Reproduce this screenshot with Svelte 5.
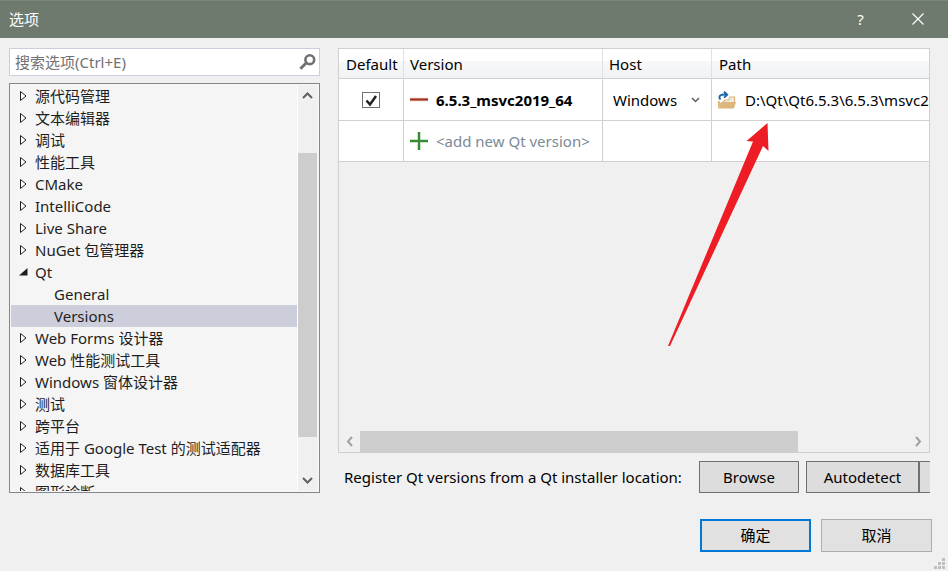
<script>
  const categories = [
    { name: '源代码管理' },
    { name: '文本编辑器' },
    { name: '调试' },
    { name: '性能工具' },
    { name: 'CMake' },
    { name: 'IntelliCode' },
    { name: 'Live Share' },
    { name: 'NuGet 包管理器' },
    { name: 'Qt', children: ['General', 'Versions'] },
    { name: 'Web Forms 设计器' },
    { name: 'Web 性能测试工具' },
    { name: 'Windows 窗体设计器' },
    { name: '测试' },
    { name: '跨平台' },
    { name: '适用于 Google Test 的测试适配器' },
    { name: '数据库工具' },
    { name: '图形诊断' }
  ];
  let selected = $state('Versions');
  let query = $state('');
  let isDefault = $state(true);
  let host = $state('Windows');
  let path = $state('D:\\Qt\\Qt6.5.3\\6.5.3\\msvc2019_64');
</script>

<div class="dialog">
  <header>
    <h1>选项</h1>
    <button class="caption" aria-label="Help">?</button>
    <button class="caption" aria-label="Close">
      <svg width="12" height="12" viewBox="0 0 12 12"><path d="M.5 .5l11 11M11.5 .5l-11 11" stroke="#fff" stroke-width="1.2" /></svg>
    </button>
  </header>

  <main>
    <aside>
      <div class="search">
        <input type="text" aria-label="搜索选项" placeholder="搜索选项(Ctrl+E)" bind:value={query} />
        <button class="find" aria-label="Search">
          <svg width="17" height="16" viewBox="0 0 17 16" fill="none" stroke="#717171">
            <circle cx="10.8" cy="5.7" r="4.4" stroke-width="2.6" />
            <path d="M7.2 9L1.4 14.8" stroke-width="3" />
          </svg>
        </button>
      </div>

      <div class="tree">
        <ul>
          {#each categories as item}
            <li>
              <button class="node" onclick={() => (selected = item.name)}>
                {#if item.children}
                  <svg width="9" height="10" viewBox="0 0 9 10"><path d="M8.5 1v7.5H0z" fill="#1e1e1e" /></svg>
                {:else}
                  <svg width="9" height="10" viewBox="0 0 9 10"><path d="M1.5 .5v9L7 5z" fill="#fff" stroke="#1e1e1e" /></svg>
                {/if}
                {item.name}
              </button>
              {#if item.children}
                <ul>
                  {#each item.children as child}
                    <li>
                      <button class="node child" class:selected={selected === child} onclick={() => (selected = child)}>{child}</button>
                    </li>
                  {/each}
                </ul>
              {/if}
            </li>
          {/each}
        </ul>
        <div class="vbar">
          <svg width="19" height="22" viewBox="0 0 19 22"><path d="M5 13l4.5-4.5L14 13" fill="none" stroke="#606060" stroke-width="2" /></svg>
          <div class="vtrack"><div class="vthumb"></div></div>
          <svg width="19" height="22" viewBox="0 0 19 22"><path d="M5 9l4.5 4.5L14 9" fill="none" stroke="#606060" stroke-width="2" /></svg>
        </div>
      </div>
    </aside>

    <section>
      <div class="grid">
        <div class="viewport">
          <table>
            <colgroup><col class="c1" /><col class="c2" /><col class="c3" /><col /></colgroup>
            <thead>
              <tr><th>Default</th><th>Version</th><th>Host</th><th>Path</th></tr>
            </thead>
            <tbody>
              <tr>
                <td class="center"><input type="checkbox" aria-label="Default" bind:checked={isDefault} /></td>
                <td>
                  <div class="cell">
                    <button class="icon" aria-label="Remove version">
                      <svg width="18" height="18" viewBox="0 0 18 18"><path d="M0 8.5h18" stroke="#e5b9b1" stroke-width="3.5" /><path d="M0 8.5h18" stroke="#a1301c" stroke-width="2" /></svg>
                    </button>
                    <strong>6.5.3_msvc2019_64</strong>
                  </div>
                </td>
                <td>
                  <div class="host">
                    <select aria-label="Host" bind:value={host}>
                      <option>Windows</option>
                      <option>Linux SSH</option>
                      <option>Linux WSL</option>
                    </select>
                    <svg width="9" height="6" viewBox="0 0 9 6"><path d="M1 1l3.5 3.5L8 1" fill="none" stroke="#606060" stroke-width="1.5" /></svg>
                  </div>
                </td>
                <td>
                  <div class="cell path">
                    <button class="icon" aria-label="Browse for path">
                      <svg width="18" height="18" viewBox="0 0 18 18">
                        <path d="M0 17V10h1.5l1.500 2.5z" fill="#dcb67a" />
                        <path d="M4.5 11.5L7 9h3.5l1.500-3h4.5v5.5z" fill="#efebe3" stroke="#dcb67a" stroke-width="1.2" />
                        <path d="M0 17.5L3.8 11H18L16 17.5z" fill="#dcb67a" />
                        <path d="M2.5 8.5C-.5 5 3 3 8.5 3.6M6 .6L9.2 3.7L6 6.6" fill="none" stroke="#1c66ad" stroke-width="1.9" />
                      </svg>
                    </button>
                    <input type="text" aria-label="Path" bind:value={path} />
                  </div>
                </td>
              </tr>
              <tr>
                <td></td>
                <td>
                  <div class="cell">
                    <button class="icon" aria-label="Add version">
                      <svg width="18" height="18" viewBox="0 0 18 18"><path d="M0 9h18M9 0v18" stroke="#b9dcb9" stroke-width="3.5" /><path d="M0 9h18M9 0v18" stroke="#388a34" stroke-width="2" /></svg>
                    </button>
                    <span class="hint">&lt;add new Qt version&gt;</span>
                  </div>
                </td>
                <td></td>
                <td></td>
              </tr>
            </tbody>
          </table>
        </div>
        <div class="hbar">
          <svg width="21" height="21" viewBox="0 0 21 21"><path d="M13 6l-4 4.5L13 15" fill="none" stroke="#a0a0a0" stroke-width="2" /></svg>
          <div class="htrack"><div class="hthumb"></div></div>
          <svg width="21" height="21" viewBox="0 0 21 21"><path d="M8 6l4 4.5L8 15" fill="none" stroke="#a0a0a0" stroke-width="2" /></svg>
        </div>
        <svg class="arrow" width="102" height="224" viewBox="0 0 102 224">
          <path d="M99.5 0L100.5 28L95 23L2 223H0L85 18.5L78.5 18z" fill="#ee1c24" />
        </svg>
      </div>

      <div class="register">
        <span>Register Qt versions from a Qt installer location:</span>
        <button class="tool browse">Browse</button>
        <button class="tool detect">Autodetect</button>
        <button class="tool more" aria-label="More"></button>
      </div>
    </section>
  </main>

  <footer>
    <button class="ok">确定</button>
    <button>取消</button>
    <svg class="grip" width="12" height="12" viewBox="0 0 12 12">
      <path d="M8 0h3v3h-3zM4 4h3v3h-3zM8 4h3v3h-3zM0 8h3v3h-3zM4 8h3v3h-3zM8 8h3v3h-3z" fill="#bfbfbf" />
    </svg>
  </footer>
</div>

<style>
  .dialog {
    display: flex;
    flex-direction: column;
    height: 100vh;
    position: relative;
    overflow: hidden;
    box-sizing: border-box;
    background: #f0f0f0;
    color: #000;
    font: 15px/22px 'Noto Sans', 'Noto Sans CJK SC', sans-serif;
  }
  .dialog * { box-sizing: border-box; }
  button, input, select { font: inherit; color: inherit; margin: 0; padding: 0; border-radius: 0; }
  svg { display: block; flex: none; }
  ul { list-style: none; margin: 0; padding: 0; }

  header {
    flex: none;
    display: flex;
    align-items: center;
    height: 38px;
    padding: 0 2px 2px 9px;
    background: #6f7a6e;
    border-top: 1px solid #7b867a;
    color: #fff;
  }
  h1 { flex: 1; margin: 0; font-size: 15px; font-weight: 400; }
  .caption { width: 57px; height: 35px; border: 0; background: none; display: flex; align-items: center; justify-content: center; }

  main { flex: 1; min-height: 0; display: flex; gap: 18px; padding: 10px 18px 0 9px; }
  aside { flex: none; width: 311px; display: flex; flex-direction: column; gap: 7px; }
  .search { display: flex; align-items: center; height: 28px; background: #fff; border: 1px solid #cccedb; padding: 0 3px 0 5px; }
  .search input { flex: 1; min-width: 0; border: 0; outline: 0; background: none; }
  .search input::placeholder { color: #717171; opacity: 1; }
  .find { border: 0; background: none; }

  .tree { flex: 1; min-height: 0; display: flex; border: 1px solid #828790; background: #f5f5f5; padding: 1px 2px 1px 1px; color: #1e1e1e; }
  .tree > ul { flex: 1; overflow: hidden; }
  .node { display: flex; align-items: center; gap: 7px; width: 100%; height: 22px; padding: 0 0 0 8px; border: 0; background: none; white-space: nowrap; }
  .child { padding-left: 43px; }
  .selected { background: #cccedb; }
  .vbar { flex: none; display: flex; flex-direction: column; width: 20px; border-left: 1px solid #fff; background: #f0f0f0; }
  .vtrack { flex: 1; padding-top: 46px; }
  .vthumb { height: 90%; background: #cdcdcd; }

  section { flex: 1; min-width: 0; display: flex; flex-direction: column; gap: 8px; }
  .grid { position: relative; flex: 1; min-height: 0; display: flex; flex-direction: column; border: 1px solid #d0d0d0; }
  .viewport { flex: 1; min-height: 0; overflow: hidden; }
  table { width: 100%; table-layout: fixed; border-collapse: separate; border-spacing: 0; background: #fff; }
  .c1 { width: 65px; }
  .c2 { width: 199px; }
  .c3 { width: 109px; }
  th { height: 30px; padding: 0 0 0 6px; text-align: left; font-weight: 400; white-space: nowrap; background: linear-gradient(#fff 40%, #f7f8fa 41%, #f1f2f4); border-right: 1px solid #dfe1e4; border-bottom: 1px solid #d0d0d0; }
  td { height: 42px; padding: 0; border-right: 1px solid #d0d0d0; border-bottom: 1px solid #d0d0d0; }
  tbody tr:last-child td { height: 41px; }
  th:first-child, th:last-child { padding-left: 7px; }
  th:last-child, td:last-child { border-right: 0; }
  .center { text-align: center; }
  input[type='checkbox'] {
    appearance: none;
    display: block;
    margin: 0 auto;
    width: 18px;
    height: 16px;
    border: 1px solid #707070;
    background: #fff;
  }
  input[type='checkbox']:checked {
    background-image: url("data:image/svg+xml,%3Csvg xmlns='http://www.w3.org/2000/svg' width='16' height='14'%3E%3Cpath d='M3.5 7.5L7 11.5L13 3' fill='none' stroke='%23212121' stroke-width='2.5'/%3E%3C/svg%3E");
  }
  .cell { display: flex; align-items: center; gap: 8px; padding-left: 6px; overflow: hidden; white-space: nowrap; }
  .icon { flex: none; border: 0; background: none; }
  .hint { color: #7b8a97; }
  .path { gap: 9px; }
  .path input { flex: none; width: 260px; border: 0; outline: 0; background: none; }
  .host { display: grid; align-items: center; }
  .host > * { grid-area: 1 / 1; }
  .host select { appearance: none; border: 0; background: none; height: 28px; padding-left: 10px; width: 100%; }
  .host svg { justify-self: end; margin-right: 11px; pointer-events: none; }

  .hbar { flex: none; display: flex; height: 21px; }
  .htrack { flex: 1; }
  .hthumb { width: 80%; height: 100%; background: #cdcdcd; }
  .arrow { position: absolute; left: 329px; top: 74px; pointer-events: none; }

  .register { flex: none; display: flex; align-items: center; height: 32px; padding-left: 6px; overflow: hidden; white-space: nowrap; }
  .register span { flex: 1; }
  .tool { flex: none; height: 32px; border: 1px solid #707070; background: #ddd; }
  .browse { width: 100px; margin-right: 7px; }
  .detect { width: 113px; }
  .more { width: 11px; border-left: 1px solid #707070; border-right: 0; }

  footer { flex: none; display: flex; justify-content: flex-end; gap: 10px; padding: 26px 16px 19px; }
  footer button { width: 111px; height: 33px; padding-bottom: 2px; border: 1px solid #adadad; background: #e1e1e1; }
  footer .ok { border: 2px solid #0078d7; }
  .grip { position: absolute; right: 2px; bottom: 1px; }
</style>
